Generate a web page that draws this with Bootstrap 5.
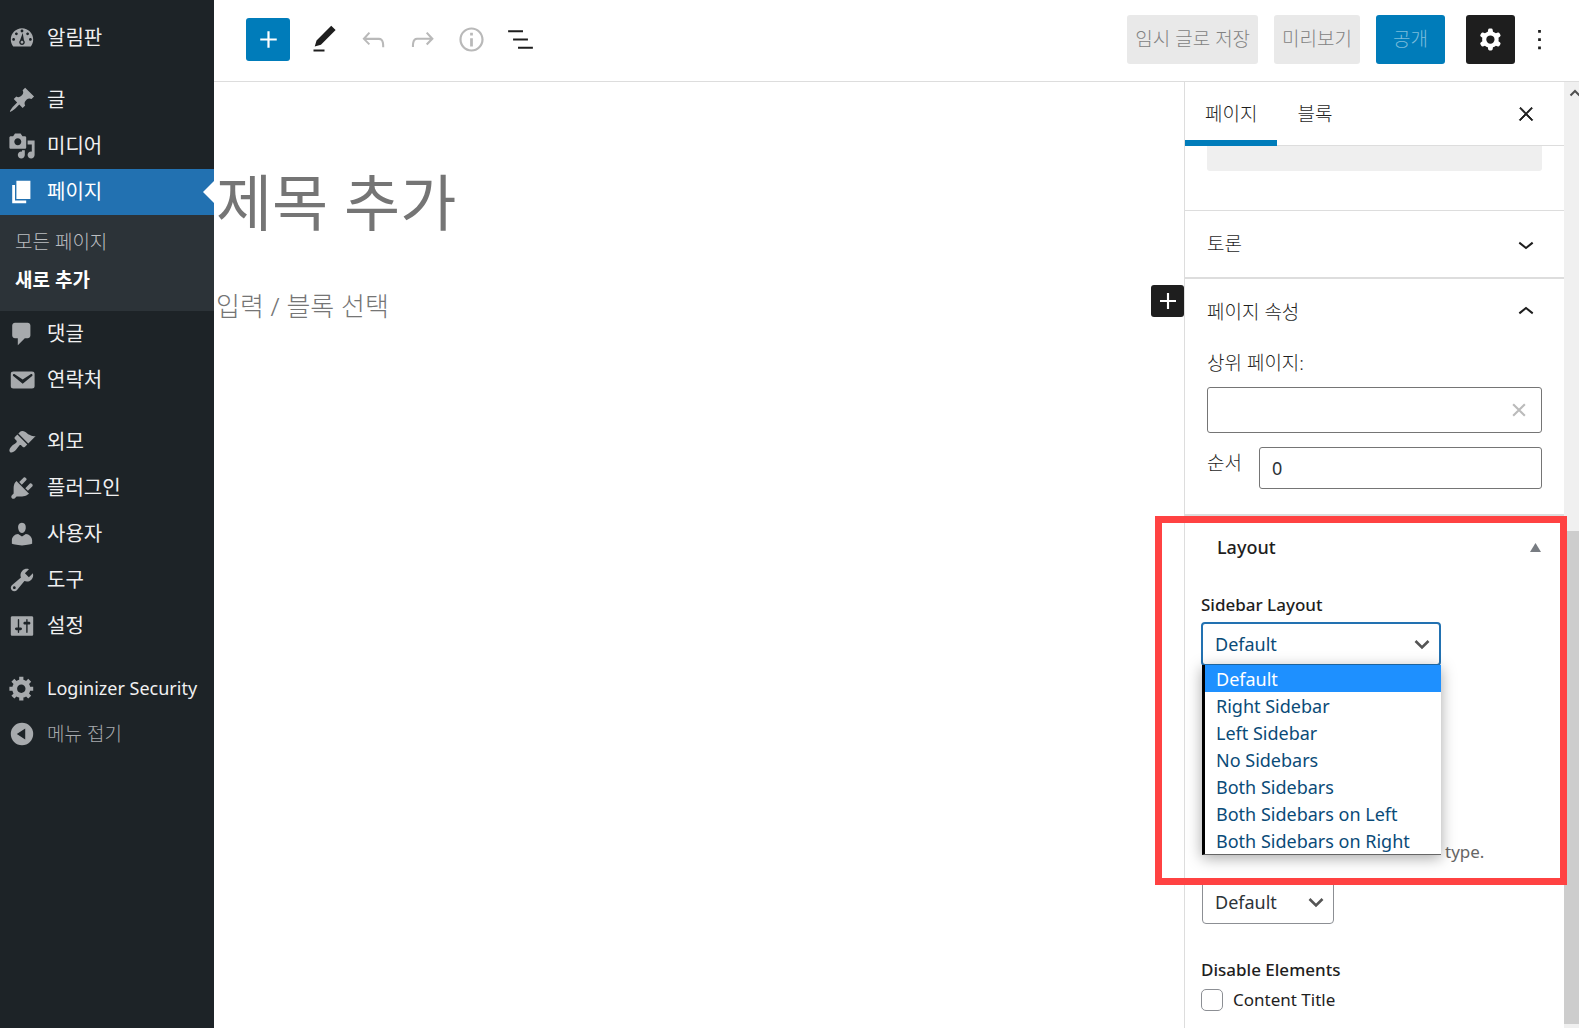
<!DOCTYPE html>
<html lang="ko">
<head>
<meta charset="utf-8">
<meta name="viewport" content="width=device-width, initial-scale=1">
<title>새 페이지 추가</title>
<link href="https://cdn.jsdelivr.net/npm/bootstrap@5.3.0/dist/css/bootstrap.min.css" rel="stylesheet">
<style>
body{font-family:"Noto Sans","Noto Sans CJK KR",sans-serif;font-size:18px;line-height:26px;color:#1e1e1e;background:#fff}
button{color:inherit}
svg{display:block;fill:currentColor;flex:none}
.ko{font-size:19px;font-weight:300}
/* admin menu */
.adminmenu{width:214px;background:#1d2327;color:#f0f0f1;padding-top:15px}
.adminmenu a,.collapse-btn{display:flex;align-items:center;height:46px;padding:0 0 0 8px;gap:11px;color:#f0f0f1;text-decoration:none;font-size:20px;white-space:nowrap}
.adminmenu svg{width:28px;height:28px;fill:#a7aaad;fill-rule:evenodd}
.adminmenu .latin{font-size:18px}
.sep{height:16px}
.adminmenu a.current{background:#2271b1;color:#fff}
.adminmenu a.current svg{fill:#fff}
.arrow{right:0;top:12px;border:11px solid transparent;border-right-color:#fff;border-left:0}
.submenu{background:#2c3338;padding:8px 0 12px}
.adminmenu .submenu a{height:38px;padding-left:15px;font-size:19px;color:#bbbec1;font-weight:300}
.adminmenu .submenu a.here{color:#fff;font-weight:700}
.adminmenu .collapse-btn{background:none;border:0;color:#a7aaad;font-size:19px;font-weight:300;width:100%}
/* top bar */
.topbar{height:82px;border-bottom:1px solid #ddd;padding:0 15px 3px 32px}
.topbar svg{width:33px;height:33px}
.tool{width:49px;height:49px;padding:0;border:0;background:none;display:flex;align-items:center;justify-content:center;border-radius:3px}
.tool:disabled{color:#b9b9b9}
.tool.inserter{width:44px;height:43px;background:#007cba;color:#fff;margin-right:10px}
.tool.cog{background:#1e1e1e;color:#fff;margin-left:21px}
.act{height:49px;border:0;border-radius:3px;padding:0 8px;background:#e9e9e9;color:#828282}
.act.publish{background:#007cba;color:#7cbcdc;padding:0 17px}
/* canvas */
.page-title{font-size:61px;line-height:80px;color:#757575;font-weight:400;margin:81px 0 0;padding-left:2px}
.prompt{margin-top:42px;color:#757575}
.prompt p{font-size:26px;line-height:42px;font-weight:300;margin:0;padding-left:2px}
.tool.add-block{width:33px;height:32px;background:#1e1e1e;color:#fff}
/* settings panel */
.panel{width:395px}
.settings{border-left:1px solid #ddd}
.tabs{height:64px;border-bottom:1px solid #ddd;padding-right:14px}
.tab{border:0;background:none;padding:0 20px;height:64px;margin-bottom:-1px;border-bottom:6px solid transparent;border-top:5px solid transparent}
.tab.active{border-bottom-color:#007cba}
.chunk{padding:0 22px 39px;border-bottom:1px solid #ddd}
.chunk div{height:25px;background:#efefef;border-radius:0 0 3px 3px}
.head{height:66px;width:100%;padding:0 22px;border:0;background:none}
.rule{border-bottom:2px solid #ddd}
.head.rule{height:68px;border-bottom:2px solid #ddd}
.attrs{padding:5px 22px 25px}
.attrs .order-row{margin-top:14px}
.combo-wrap{margin-top:11px}
.order-row label{width:52px;padding-top:3px}
.box{border:1px solid #757575;border-radius:3px;padding:0 12px;font-size:18px;color:#2c3338;background:#fff}
.box.combo{height:46px;width:100%}
.box.order{height:42px;min-width:0}
.clear{right:7px;top:7px;width:32px;height:32px;padding:0;border:0;background:none;color:#bbb}
.meta-head{height:62px;padding:0 23px 0 32px;font-weight:500;border:0;background:none;width:100%}
.tri{width:11px;height:9px;fill:#787c82}
.meta{padding:14px 16px 0}
.meta .title{font-size:17px;font-weight:500;display:block}
.form-select.pick{height:44px;font-size:18px;line-height:26px;padding:0 40px 0 12px;border:1px solid #8c8f94;border-radius:4px;color:#2c3338;width:auto;background-position:right 8px center;background-size:18px;background-image:url("data:image/svg+xml,%3Csvg xmlns='http://www.w3.org/2000/svg' viewBox='0 0 18 18'%3E%3Cpath d='M2.500 6 9 12.500 15.500 6' fill='none' stroke='%23555' stroke-width='2.600'/%3E%3C/svg%3E")}
.form-select.pick.open{width:240px;border:2px solid #2271b1;color:#0a4b78}
.form-select.pick.short{width:132px;margin:15px 0 33px 1px}
.field{padding-bottom:173px}
.options{left:1px;top:43px;width:239px;z-index:3;background:#fff;border-left:3px solid #000;border-bottom:1px solid #666;box-shadow:0 3px 14px rgba(0,0,0,.35);color:#0a4b78}
.options li{height:27px;line-height:28px;padding-left:11px;white-space:nowrap}
.options li.on{background:#1e90ff;color:#fff}
.marker{left:-30px;right:-3px;top:0;height:369px;border:7px solid #ff4242;z-index:4;pointer-events:none}
.form-check-input.tick{width:22px;height:22px;border:1px solid #8c8f94;border-radius:5px;margin:0}
.tick-row{gap:10px;font-size:17px}
.scroller{width:16px;background:#f0f0f0}
.scroller .thumb{background:#cdcdcd;margin:449px 0 4px}
.scroller svg{left:5px;top:7px;width:12px;height:8px}
.meta .desc{font-size:17px;color:#666;margin:0;padding-left:244px}
</style>
</head>
<body>
<div class="d-flex vh-100 overflow-hidden">
  <nav class="adminmenu flex-shrink-0" aria-label="관리자 메뉴">
    <a href="#"><svg viewBox="0 0 20 20"><path d="M3.760 16h12.480c1.100-1.370 1.760-3.110 1.760-5 0-4.420-3.580-8-8-8s-8 3.580-8 8c0 1.890.66 3.630 1.760 5zM10 4c.55 0 1 .45 1 1s-.45 1-1 1-1-.45-1-1 .45-1 1-1zM6 6c.55 0 1 .45 1 1s-.45 1-1 1-1-.45-1-1 .45-1 1-1zm8 0c.55 0 1 .45 1 1s-.45 1-1 1-1-.45-1-1 .45-1 1-1zm-5.370 5.550L10.500 6.500 11.400 11.600c.37.36.6.86.6 1.400 0 1.100-.9 2-2 2s-2-.9-2-2c0-.57.24-1.080.63-1.450zM4 10c.55 0 1 .45 1 1s-.45 1-1 1-1-.45-1-1 .45-1 1-1zm12 0c.55 0 1 .45 1 1s-.45 1-1 1-1-.45-1-1 .45-1 1-1zm-6 2c-.55 0-1 .45-1 1s.45 1 1 1 1-.45 1-1-.45-1-1-1z"/></svg>알림판</a>
    <div class="sep"></div>
    <a href="#"><svg viewBox="0 0 20 20"><path d="M10.440 3.020l1.820-1.820 6.360 6.350-1.830 1.820c-1.050-.68-2.480-.57-3.410.36l-.75.75c-.92.93-1.040 2.350-.35 3.410l-1.830 1.820-2.410-2.410-2.800 2.790c-.42.42-3.380 2.710-3.800 2.290s1.860-3.390 2.280-3.810l2.790-2.790L4.100 9.360l1.830-1.820c1.050.69 2.480.57 3.400-.36l.75-.75c.93-.92 1.050-2.350.36-3.410z"/></svg>글</a>
    <a href="#"><svg viewBox="0 0 20 20"><path d="M13 11V4c0-.55-.45-1-1-1h-1.670L9 1H5L3.670 3H2c-.55 0-1 .45-1 1v7c0 .55.45 1 1 1h10c.55 0 1-.45 1-1zM7 4.500c1.380 0 2.500 1.120 2.500 2.500S8.380 9.500 7 9.500 4.500 8.380 4.500 7 5.620 4.500 7 4.500zM14 6h5v10.500c0 1.380-1.120 2.500-2.500 2.500S14 17.880 14 16.500s1.120-2.500 2.500-2.500c.17 0 .34.02.5.05V9h-3V6zm-4 8.050V13h2v3.500c0 1.380-1.120 2.500-2.500 2.500S7 17.880 7 16.500 8.120 14 9.500 14c.17 0 .34.02.5.05z"/></svg>미디어</a>
    <a href="#" class="current position-relative"><svg viewBox="0 0 20 20"><path d="M6 15V2h10v13H6zm-1 1h8v2H3V5h2v11z"/></svg>페이지<span class="arrow position-absolute"></span></a>
    <div class="submenu"><a href="#">모든 페이지</a><a href="#" class="here">새로 추가</a></div>
    <a href="#"><svg viewBox="0 0 20 20"><path d="M5 2h9c1.100 0 2 .9 2 2v7c0 1.100-.9 2-2 2h-2l-5 5v-5H5c-1.100 0-2-.9-2-2V4c0-1.100.9-2 2-2z"/></svg>댓글</a>
    <a href="#"><svg viewBox="0 0 20 20"><path d="M3.870 4h13.250C18.370 4 19 4.590 19 5.790v8.420c0 1.190-.63 1.790-1.880 1.790H3.870c-1.250 0-1.880-.6-1.880-1.790V5.790c0-1.200.63-1.790 1.880-1.790zm6.620 8.600l6.740-5.530c.24-.2.43-.66.13-1.070-.29-.41-.82-.42-1.170-.17l-5.700 3.860L4.800 5.830c-.35-.25-.88-.24-1.170.17-.3.41-.11.87.13 1.070z"/></svg>연락처</a>
    <div class="sep"></div>
    <a href="#"><svg viewBox="0 0 20 20"><path d="M14.480 11.060L7.410 3.990l1.500-1.500c.5-.56 2.300-.47 3.510.32 1.210.8 1.430 1.280 2.910 2.100 1.180.64 2.450 1.260 4.450.85zm-.71.71L6.700 4.700 4.930 6.470c-.39.39-.39 1.020 0 1.410l1.060 1.060c.39.39.39 1.030 0 1.420-.6.6-1.430 1.110-2.210 1.690-.35.26-.7.53-1.010.84C1.430 14.230.4 16.080 1.400 17.070c.99 1 2.840-.03 4.180-1.360.31-.31.58-.66.85-1.020.57-.78 1.080-1.610 1.690-2.210.39-.39 1.020-.39 1.410 0l1.060 1.060c.39.39 1.020.39 1.410 0z"/></svg>외모</a>
    <a href="#"><svg viewBox="0 0 20 20"><path d="M13.110 4.360L9.870 7.600 8 5.730l3.240-3.240c.35-.34 1.050-.2 1.560.32.52.51.66 1.210.31 1.550zm-8 1.770l.91-1.120 9.010 9.010-1.190.84c-.71.71-2.630 1.160-3.820 1.160H6.140L4.900 17.260c-.59.59-1.540.59-2.120 0-.59-.58-.59-1.530 0-2.120l1.240-1.240v-3.880c0-1.130.4-3.190 1.090-3.890zm7.260 3.970l3.240-3.240c.34-.35 1.040-.21 1.550.31.52.51.66 1.210.31 1.550l-3.240 3.250z"/></svg>플러그인</a>
    <a href="#"><svg viewBox="0 0 20 20"><path d="M10 9.250c-2.270 0-2.730-3.440-2.730-3.440C7 4.020 7.820 2 9.970 2c2.160 0 2.980 2.020 2.710 3.810 0 0-.41 3.440-2.680 3.440zm0 2.570L12.720 10c2.390 0 4.520 2.330 4.520 4.530v2.490s-3.650 1.130-7.240 1.130c-3.650 0-7.240-1.130-7.240-1.130v-2.490c0-2.250 1.940-4.480 4.470-4.480z"/></svg>사용자</a>
    <a href="#"><svg viewBox="0 0 20 20"><path d="M16.680 9.770c-1.340 1.340-3.300 1.670-4.950.99l-5.410 6.520c-.99.99-2.590.99-3.580 0s-.99-2.590 0-3.570l6.520-5.420c-.68-1.650-.35-3.610.99-4.950 1.280-1.280 3.120-1.620 4.720-1.060l-2.890 2.890 2.820 2.820 2.860-2.870c.53 1.580.18 3.390-1.080 4.650zM3.810 16.210c.4.39 1.040.39 1.430 0 .4-.4.4-1.040 0-1.430-.39-.4-1.030-.4-1.430 0-.39.39-.39 1.030 0 1.430z"/></svg>도구</a>
    <a href="#"><svg viewBox="0 0 20 20"><path d="M18 16V4c0-.55-.45-1-1-1H3c-.55 0-1 .45-1 1v12c0 .55.45 1 1 1h14c.55 0 1-.45 1-1zM8 11h1c.55 0 1 .45 1 1s-.45 1-1 1H8v1.500c0 .28-.22.5-.5.5s-.5-.22-.5-.5V13H6c-.55 0-1-.45-1-1s.45-1 1-1h1V5.500c0-.28.22-.5.5-.5s.5.22.5.5V11zm5-2h-1c-.55 0-1-.45-1-1s.45-1 1-1h1V5.500c0-.28.22-.5.5-.5s.5.22.5.5V7h1c.55 0 1 .45 1 1s-.45 1-1 1h-1v5.500c0 .28-.22.5-.5.5s-.5-.22-.5-.5V9z"/></svg>설정</a>
    <div class="sep"></div>
    <a href="#" class="latin"><svg viewBox="0 0 20 20"><path d="M18 12h-2.180c-.17.7-.44 1.350-.81 1.930l1.540 1.540-2.100 2.100-1.540-1.540c-.58.36-1.230.63-1.910.79V19H8v-2.180c-.68-.16-1.330-.43-1.910-.79l-1.540 1.540-2.120-2.120 1.540-1.540c-.36-.58-.63-1.230-.79-1.910H1V9.030h2.170c.16-.7.44-1.350.8-1.940L2.430 5.550l2.100-2.100 1.540 1.540c.58-.37 1.240-.64 1.930-.81V2h3v2.180c.68.16 1.330.43 1.910.79l1.540-1.540 2.120 2.120-1.540 1.540c.36.59.64 1.240.8 1.940H18V12zm-8.500 1.500c1.660 0 3-1.340 3-3s-1.340-3-3-3-3 1.340-3 3 1.340 3 3 3z"/></svg>Loginizer Security</a>
    <button type="button" class="collapse-btn"><svg viewBox="0 0 20 20"><path d="M10 2a8 8 0 100 16 8 8 0 000-16zM12.300 6v8L6.300 10z"/></svg>메뉴 접기</button>
  </nav>

  <div class="d-flex flex-column flex-grow-1">
    <header class="topbar d-flex align-items-center flex-shrink-0">
      <button class="tool inserter" aria-label="블록 추가"><svg viewBox="0 0 24 24"><path d="M18 11.200h-5.200V6h-1.600v5.200H6v1.600h5.200V18h1.600v-5.200H18z"/></svg></button>
      <button class="tool" aria-label="도구"><svg viewBox="0 0 24 24"><path d="M20.100 5.100L16.900 2 6.200 12.700l-1.300 4.400 4.500-1.300L20.100 5.100zM4 20.800h8v-1.500H4v1.500z"/></svg></button>
      <button class="tool" disabled aria-label="실행 취소"><svg viewBox="0 0 24 24"><path d="M18.300 11.700c-.6-.6-1.400-.9-2.300-.9H6.700l2.900-3.300-1.100-1-4.500 5L8.500 16l1-1-2.700-2.700H16c.5 0 .9.2 1.300.5 1 1 1 3.400 1 4.500v.3h1.500v-.2c0-1.500 0-4.300-1.500-5.700z"/></svg></button>
      <button class="tool" disabled aria-label="다시 실행"><svg viewBox="0 0 24 24"><path d="M15.600 6.500l-1.100 1 2.900 3.300H8c-.9 0-1.700.3-2.300.9-1.400 1.500-1.400 4.200-1.400 5.600v.2h1.500v-.3c0-1.100 0-3.500 1-4.500.3-.3.7-.5 1.300-.5h9.200L14.500 15l1.100 1.100 4.600-4.600-4.600-5z"/></svg></button>
      <button class="tool" disabled aria-label="상세"><svg viewBox="0 0 24 24"><path d="M12 3.200c-4.800 0-8.800 3.900-8.800 8.800 0 4.800 3.900 8.800 8.800 8.800 4.800 0 8.800-3.900 8.800-8.800 0-4.800-4-8.800-8.800-8.800zm0 16c-4 0-7.200-3.300-7.200-7.200C4.800 8 8 4.800 12 4.800s7.200 3.300 7.200 7.200c0 4-3.200 7.200-7.200 7.200zM11 17h2v-6h-2v6zm0-8h2V7h-2v2z"/></svg></button>
      <button class="tool" aria-label="목록 보기"><svg viewBox="0 0 24 24"><path d="M13.800 5.200H3v1.500h10.800V5.200zm-3.600 12v1.500H21v-1.500H10.200zm7.200-6H6.600v1.500h10.800v-1.500z"/></svg></button>
      <div class="d-flex ms-auto">
        <div class="d-flex gap-3">
          <button class="act ko" type="button">임시 글로 저장</button>
          <button class="act ko" type="button">미리보기</button>
          <button class="act ko publish" type="button">공개</button>
        </div>
        <button class="tool cog" aria-label="설정"><svg viewBox="0 0 24 24"><path fill-rule="evenodd" d="M10.289 4.836A1 1 0 0111.275 4h1.306a1 1 0 01.987.836l.244 1.466c.787.26 1.503.679 2.108 1.218l1.393-.522a1 1 0 011.216.437l.653 1.130a1 1 0 01-.23 1.273l-1.148.944a6.025 6.025 0 010 2.435l1.149.946a1 1 0 01.23 1.272l-.653 1.130a1 1 0 01-1.216.437l-1.394-.522c-.605.54-1.320.958-2.108 1.218l-.244 1.466a1 1 0 01-.987.836h-1.306a1 1 0 01-.986-.836l-.244-1.466a5.995 5.995 0 01-2.108-1.218l-1.394.522a1 1 0 01-1.217-.436l-.653-1.131a1 1 0 01.23-1.272l1.149-.946a6.026 6.026 0 010-2.435l-1.148-.944a1 1 0 01-.23-1.272l.653-1.131a1 1 0 011.217-.437l1.393.522a5.994 5.994 0 012.108-1.218l.244-1.466zM14.929 12a3 3 0 11-6 0 3 3 0 016 0z"/></svg></button>
        <button class="tool" aria-label="옵션"><svg viewBox="0 0 24 24"><path d="M13 19h-2v-2h2v2zm0-6h-2v-2h2v2zm0-6h-2V5h2v2z"/></svg></button>
      </div>
    </header>

    <div class="d-flex flex-grow-1">
      <main class="flex-grow-1">
        <h1 class="page-title">제목 추가</h1>
        <div class="prompt d-flex align-items-start justify-content-between">
          <p>입력 / 블록 선택</p>
          <button class="tool add-block" aria-label="블록 추가"><svg width="32" height="32" viewBox="0 0 24 24"><path d="M18 11.200h-5.200V6h-1.600v5.200H6v1.600h5.200V18h1.600v-5.200H18z"/></svg></button>
        </div>
      </main>

      <aside class="panel d-flex flex-shrink-0">
        <div class="settings flex-grow-1">
          <div class="tabs d-flex align-items-center">
            <button class="tab ko active" type="button">페이지</button>
            <button class="tab ko" type="button">블록</button>
            <button class="tool ms-auto" aria-label="설정 닫기"><svg width="32" height="32" viewBox="0 0 24 24"><path d="M13 11.800l6.100-6.300-1-1-6.100 6.200-6.100-6.200-1 1 6.100 6.300-6.500 6.700 1 1 6.500-6.600 6.500 6.600 1-1z" transform="translate(4 4) scale(.67)" stroke="currentColor"/></svg></button>
          </div>
          <div class="chunk"><div></div></div>
          <button class="head ko rule d-flex justify-content-between align-items-center" type="button">토론<svg width="32" height="32" viewBox="0 0 24 24"><path d="M17.500 11.600L12 16l-5.500-4.400.9-1.200L12 14l4.500-3.600 1 1.200z"/></svg></button>
          <section class="rule">
            <button class="head ko d-flex justify-content-between align-items-center" type="button">페이지 속성<svg width="32" height="32" viewBox="0 0 24 24"><path d="M6.500 12.400L12 8l5.500 4.400-.9 1.200L12 10l-4.500 3.600-1-1.200z"/></svg></button>
            <div class="attrs">
              <label class="ko d-block" for="parent">상위 페이지:</label>
              <div class="position-relative combo-wrap">
                <input id="parent" class="box combo d-block" type="text">
                <button class="clear position-absolute" aria-label="지우기"><svg width="32" height="32" viewBox="0 0 24 24"><path d="M7.600 7.600l8.800 8.800M16.400 7.600l-8.800 8.800" stroke="currentColor" stroke-width="1.600"/></svg></button>
              </div>
              <div class="order-row d-flex align-items-start">
                <label class="ko flex-shrink-0" for="order">순서</label>
                <input id="order" class="box order flex-grow-1" type="text" value="0">
              </div>
            </div>
          </section>

          <section class="position-relative">
            <button class="meta-head d-flex justify-content-between align-items-center" type="button">Layout<svg class="tri" viewBox="0 0 11 9"><path d="M5.500 0L11 9H0z"/></svg></button>
            <div class="meta">
              <div class="field">
                <label class="title" for="side">Sidebar Layout</label>
                <div class="position-relative mt-1">
                  <select id="side" class="form-select pick open"><option>Default</option></select>
                  <ul class="options list-unstyled position-absolute m-0" role="listbox" aria-label="Sidebar Layout">
                    <li class="on" role="option">Default</li>
                    <li role="option">Right Sidebar</li>
                    <li role="option">Left Sidebar</li>
                    <li role="option">No Sidebars</li>
                    <li role="option">Both Sidebars</li>
                    <li role="option">Both Sidebars on Left</li>
                    <li role="option">Both Sidebars on Right</li>
                  </ul>
                </div>
              </div>
              <label class="desc d-block" for="cont">type.</label>
              <select id="cont" class="form-select pick short"><option>Default</option></select>
              <div class="title">Disable Elements</div>
              <div class="tick-row d-flex align-items-center mt-1">
                <input class="form-check-input tick" type="checkbox" id="ctitle">
                <label for="ctitle">Content Title</label>
              </div>
            </div>
            <div class="marker position-absolute"></div>
          </section>
        </div>
        <div class="scroller d-flex flex-column position-relative">
          <svg class="position-absolute" viewBox="0 0 12 8"><path d="M1.500 6.500L6 2l4.500 4.500" fill="none" stroke="#505050" stroke-width="2"/></svg>
          <div class="thumb flex-grow-1"></div>
        </div>
      </aside>
    </div>
  </div>
</div>
<script src="https://cdn.jsdelivr.net/npm/bootstrap@5.3.0/dist/js/bootstrap.bundle.min.js"></script>
</body>
</html>
